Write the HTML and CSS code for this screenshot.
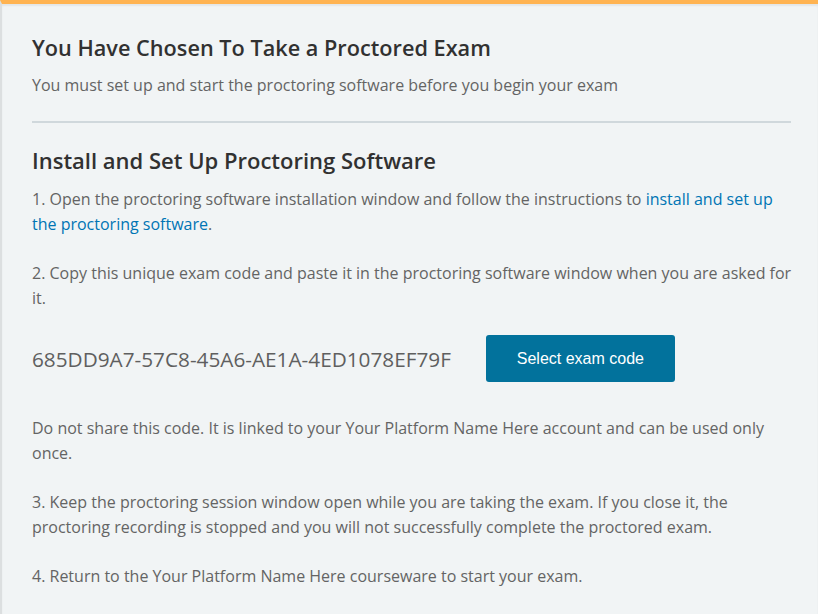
FILE: index.html
```html
<!DOCTYPE html>
<html lang="en">
<head>
<meta charset="utf-8">
<title>Proctored Exam</title>
<link rel="stylesheet" href="styles.css">
</head>
<body>
<div class="page">
  <div class="content">
    <h1 class="title">You Have Chosen To Take a Proctored Exam</h1>
    <p class="subtitle">You must set up and start the proctoring software before you begin your exam</p>
    <hr class="divider">
    <h2 class="section-title">Install and Set Up Proctoring Software</h2>
    <p class="text first">1. Open the proctoring software installation window and follow the instructions to <a class="link" href="#">install and set up the proctoring software</a>.</p>
    <p class="text">2. Copy this unique exam code and paste it in the proctoring software window when you are asked for it.</p>
    <div class="code-row">
      <span class="exam-code">685DD9A7-57C8-45A6-AE1A-4ED1078EF79F</span>
      <button class="select-btn" type="button">Select exam code</button>
    </div>
    <p class="text after-code">Do not share this code. It is linked to your Your Platform Name Here account and can be used only once.</p>
    <p class="text">3. Keep the proctoring session window open while you are taking the exam. If you close it, the proctoring recording is stopped and you will not successfully complete the proctored exam.</p>
    <p class="text">4. Return to the Your Platform Name Here courseware to start your exam.</p>
  </div>
</div>
</body>
</html>
```
FILE: styles.css
```css
html, body {
  margin: 0;
  padding: 0;
  height: 100%;
}
body {
  background: #f1f4f5;
  font-family: "Open Sans", "Noto Sans", sans-serif;
  overflow: hidden;
}
.page {
  min-height: 100%;
  border-top: 4px solid #ffb351;
  border-left: 2px solid #dcdfe0;
  box-shadow: inset 0 2px 2px rgba(0,0,0,0.06);
  box-sizing: border-box;
}
.content {
  padding: 30px 20px 0 30px;
}
.title, .section-title {
  margin: 0;
  font-size: 22px;
  line-height: 28px;
  font-weight: 600;
  color: #313131;
}
.title {
  font-size: 21.7px;
}
.subtitle {
  margin: 10.5px 0 0;
  font-size: 16px;
  line-height: 25px;
  color: #646464;
}
.divider {
  margin: 23.5px 7px 0 0;
  border: 0;
  height: 2px;
  background: #d0d8dc;
}
.section-title {
  margin-top: 23px;
}
.text {
  margin: 24px 0 0;
  font-size: 16px;
  line-height: 25px;
  color: #646464;
}
.text.first {
  margin-top: 12.5px;
}
.link {
  color: #0075b4;
  text-decoration: none;
}
.code-row {
  display: flex;
  align-items: center;
  gap: 35px;
  margin-top: 24.5px;
}
.exam-code {
  font-size: 20.75px;
  line-height: 28px;
  color: #5f5f5f;
}
.select-btn {
  width: 189px;
  height: 47px;
  border: 0;
  border-radius: 3px;
  background: #02729c;
  color: #ffffff;
  font-family: "Liberation Sans", Arial, sans-serif;
  font-size: 16px;
  padding: 0;
}
.text.after-code {
  margin-top: 33.5px;
}
```
